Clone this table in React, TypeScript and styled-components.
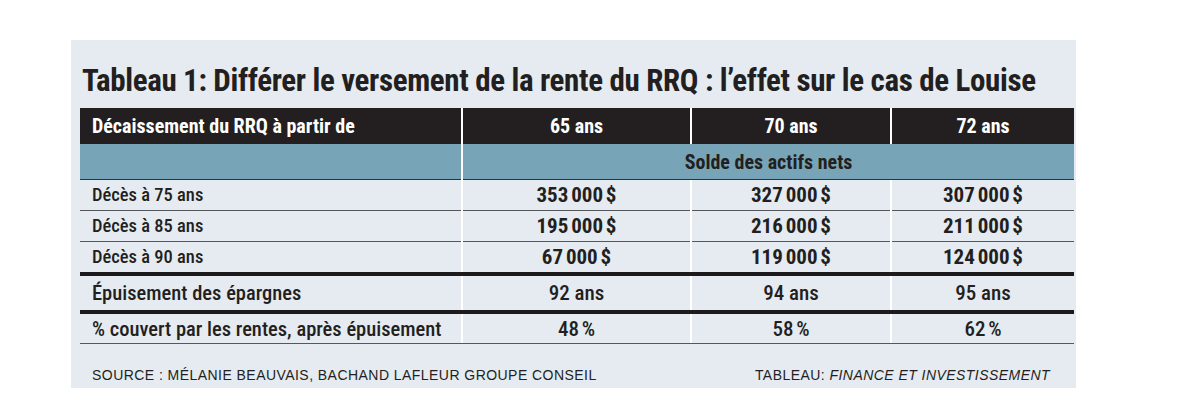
import React from "react";
import styled, { createGlobalStyle } from "styled-components";

const NARROW = 'Roboto, "DejaVu Sans Condensed", sans-serif';
const SANS = '"Liberation Sans", Arial, sans-serif';
const INK = "#231f20";

const GlobalStyle = createGlobalStyle`
  html, body { margin: 0; padding: 0; background: #ffffff; }
`;

const Page = styled.div`
  padding: 40px 0 0 71px;
`;

const Panel = styled.section`
  width: 1005px;
  height: 348px;
  box-sizing: border-box;
  background: #e5ebf1;
  padding: 0 2px 0 9px;
  display: flex;
  flex-direction: column;
`;

const Title = styled.h1`
  margin: 23px 0 9px 2px;
  font-family: ${NARROW};
  font-stretch: 75%;
  font-weight: 700;
  font-size: 31px;
  line-height: 36px;
  letter-spacing: -0.35px;
  color: ${INK};
  white-space: nowrap;
`;

const Table = styled.div`
  display: grid;
  grid-template-columns: 381px 227px 198px 182px;
  column-gap: 2px;
  background: #ffffff;
`;

const HeadCell = styled.div<{ $left?: boolean }>`
  height: 36px;
  box-sizing: border-box;
  background: ${INK};
  color: #ffffff;
  font-family: ${NARROW};
  font-stretch: 75%;
  font-weight: 700;
  font-size: 20px;
  display: flex;
  align-items: center;
  justify-content: ${(p) => (p.$left ? "flex-start" : "center")};
  padding-left: ${(p) => (p.$left ? "12px" : "0")};
`;

const BandCell = styled.div<{ $span?: number }>`
  height: 36px;
  box-sizing: border-box;
  grid-column: span ${(p) => p.$span ?? 1};
  background: #78a4b7;
  border-bottom: 1px solid #2f3336;
  color: ${INK};
  font-family: ${NARROW};
  font-stretch: 75%;
  font-weight: 700;
  font-size: 20px;
  display: flex;
  align-items: center;
  justify-content: center;
`;

const Cell = styled.div<{
  $h: number;
  $label?: boolean;
  $size: number;
  $bold?: boolean;
  $tight?: boolean;
  $rule?: boolean;
}>`
  height: ${(p) => p.$h}px;
  box-sizing: border-box;
  background: #e5ebf1;
  border-bottom: ${(p) => (p.$rule ? "1px solid #55585b" : "none")};
  color: ${INK};
  font-family: ${NARROW};
  font-stretch: 75%;
  font-weight: ${(p) => (p.$bold ? 700 : 500)};
  font-size: ${(p) => p.$size}px;
  word-spacing: ${(p) => (p.$tight ? "-2px" : "0")};
  display: flex;
  align-items: center;
  justify-content: ${(p) => (p.$label ? "flex-start" : "center")};
  padding-left: ${(p) => (p.$label ? "12px" : "0")};
  white-space: nowrap;
`;

const Rule = styled.div<{ $h: number; $color: string }>`
  grid-column: 1 / -1;
  height: ${(p) => p.$h}px;
  background: ${(p) => p.$color};
`;

const Footer = styled.footer`
  display: flex;
  justify-content: space-between;
  padding: 23px 24px 0 12px;
  font-family: ${SANS};
  font-size: 14px;
  line-height: 16px;
  letter-spacing: 0.45px;
  color: ${INK};
  white-space: nowrap;
`;

const Em = styled.span`
  font-style: italic;
`;

type Row = { label: string; values: string[] };

const assets: Row[] = [
  { label: "Décès à 75 ans", values: ["353 000 $", "327 000 $", "307 000 $"] },
  { label: "Décès à 85 ans", values: ["195 000 $", "216 000 $", "211 000 $"] },
  { label: "Décès à 90 ans", values: ["67 000 $", "119 000 $", "124 000 $"] },
];

export default function App() {
  return (
    <>
      <GlobalStyle />
      <Page>
        <Panel>
          <Title>
            Tableau 1: Différer le versement de la rente du RRQ : l’effet sur le cas de Louise
          </Title>
          <Table>
            <HeadCell $left>Décaissement du RRQ à partir de</HeadCell>
            <HeadCell>65 ans</HeadCell>
            <HeadCell>70 ans</HeadCell>
            <HeadCell>72 ans</HeadCell>

            <BandCell />
            <BandCell $span={3}>Solde des actifs nets</BandCell>

            {assets.map((row, i) => (
              <React.Fragment key={row.label}>
                <Cell $h={i < 2 ? 31 : 30} $rule={i < 2} $label $size={18.5}>
                  {row.label}
                </Cell>
                {row.values.map((v) => (
                  <Cell key={v} $h={i < 2 ? 31 : 30} $rule={i < 2} $size={21} $bold $tight>
                    {v}
                  </Cell>
                ))}
              </React.Fragment>
            ))}

            <Rule $h={4} $color="#1c1a1b" />

            <Cell $h={34} $label $size={20.5}>
              Épuisement des épargnes
            </Cell>
            <Cell $h={34} $size={21}>92 ans</Cell>
            <Cell $h={34} $size={21}>94 ans</Cell>
            <Cell $h={34} $size={21}>95 ans</Cell>

            <Rule $h={4} $color="#1c1a1b" />

            <Cell $h={29} $label $size={20.5}>
              % couvert par les rentes, après épuisement
            </Cell>
            <Cell $h={29} $size={21} $tight>48 %</Cell>
            <Cell $h={29} $size={21} $tight>58 %</Cell>
            <Cell $h={29} $size={21} $tight>62 %</Cell>

            <Rule $h={1} $color="#55585b" />
          </Table>
          <Footer>
            <span>SOURCE : MÉLANIE BEAUVAIS, BACHAND LAFLEUR GROUPE CONSEIL</span>
            <span>
              TABLEAU: <Em>FINANCE ET INVESTISSEMENT</Em>
            </span>
          </Footer>
        </Panel>
      </Page>
    </>
  );
}
